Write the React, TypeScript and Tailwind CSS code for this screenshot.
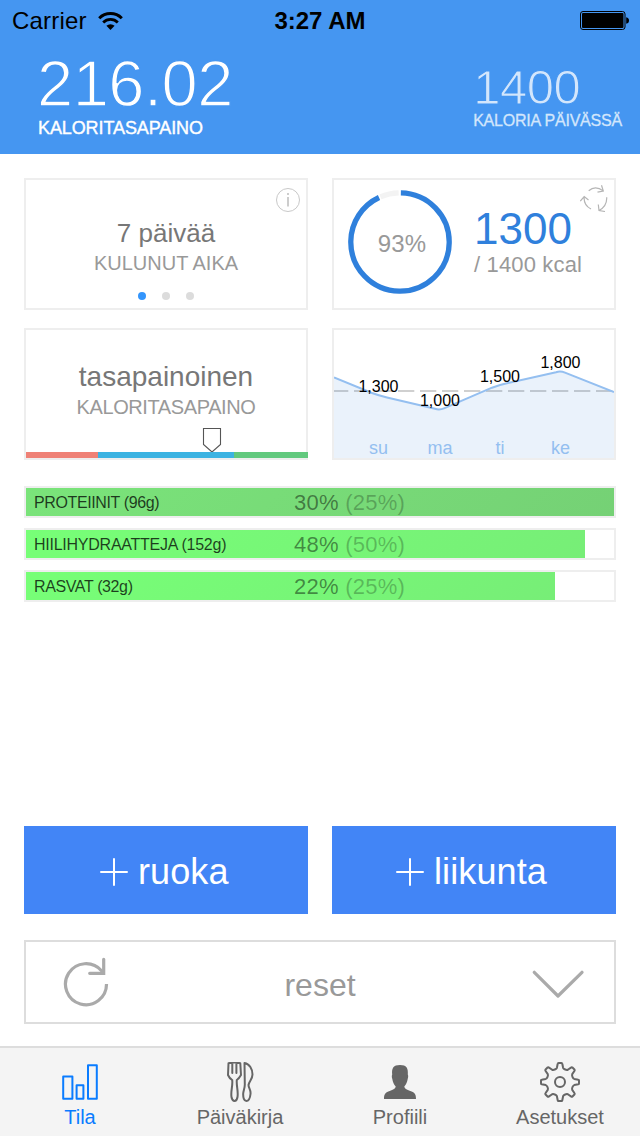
import type { ReactNode } from "react";

const card = "h-[132px] border-2 border-[#eeeeee] bg-white";

function WifiIcon() {
  return (
    <svg className="ml-[11px] h-[18px] w-[25px]" viewBox="0 0 25 18" fill="none" stroke="#000">
      <path d="M1.2 6.2a16 16 0 0 1 22.6 0" strokeWidth="3" />
      <path d="M5.2 10.4a10.4 10.4 0 0 1 14.6 0" strokeWidth="2.8" />
      <path d="M12.5 18 8.4 13.8a5.9 5.9 0 0 1 8.2 0Z" fill="#000" stroke="none" />
    </svg>
  );
}

function BatteryIcon() {
  return (
    <svg className="h-[19px] w-[50px]" viewBox="0 0 50 19">
      <rect x="0.5" y="0.5" width="44.5" height="18" rx="2.5" fill="none" stroke="#000" />
      <rect x="2" y="2" width="41.5" height="15" rx="1" />
      <path d="M46.2 6.2c2 .4 2.8 1.6 2.8 3.3s-.8 2.9-2.8 3.3Z" />
    </svg>
  );
}

function CycleIcon() {
  return (
    <svg className="h-7 w-7" viewBox="0 0 28 28" fill="none" stroke="#b5b5b5" strokeWidth="1.2">
      <path d="M8.7 6.7C13 3 18.5 3.3 23.3 7M21.5 1.3L23.3 7L17.5 8.2" />
      <path d="M26.700 13.200C27 18.500 24.500 23.500 19 26.500M18.300 20.500L19 26.500L25 27.500" />
      <path d="M11 25C5.800 22.300 3.700 17.500 4.200 12.500M0.300 17.200L4.200 12.500L8.500 16" />
    </svg>
  );
}

function RingGauge() {
  return (
    <svg className="h-[104px] w-[104px]" viewBox="0 0 104 104" fill="none" strokeWidth="5.3">
      <circle
        cx="52" cy="52" r="49.2" stroke="#2f80dc" pathLength="100"
        strokeDasharray="92.7 7.3" transform="rotate(-89 52 52)"
      />
      <circle
        cx="52" cy="52" r="49.2" stroke="#f3f3f3" pathLength="100"
        strokeDasharray="6.1 93.9" transform="rotate(-113.5 52 52)"
      />
    </svg>
  );
}

const points = [
  { label: "1,300", day: "su", x: 44.5, y: 62 },
  { label: "1,000", day: "ma", x: 106, y: 76 },
  { label: "1,500", day: "ti", x: 166, y: 52 },
  { label: "1,800", day: "ke", x: 226.5, y: 38 },
];

const chartLine =
  "M0 47.5 38 63Q45 65.6 53 67.5L101 78.8Q105.5 80.3 110 78.4L158 57.7Q166 54.7 174 53L222 42.2Q226.5 40.8 231 42.6L280 62";

function WeekChart() {
  return (
    <svg className="block h-32 w-[280px]" viewBox="0 0 280 128" fontFamily="Liberation Sans, sans-serif" textAnchor="middle">
      <path d="M-2 61H282" stroke="#d0d0d0" strokeWidth="2" strokeDasharray="16.3 5.7" />
      <path d={chartLine + "V128H0Z"} fill="#2f80dc" fillOpacity="0.1" />
      <path d={chartLine} fill="none" stroke="#94bff0" strokeWidth="2" />
      {points.map((p) => (
        <g key={p.day}>
          <text x={p.x} y={p.y} fontSize="16" fill="#000">{p.label}</text>
          <text x={p.x} y="124" fontSize="18" fill="#94bff0">{p.day}</text>
        </g>
      ))}
    </svg>
  );
}

function Nutrient(props: { name: string; share: string; target: string; fill: string; tracking: string }) {
  return (
    <div className="grid h-8 grid-rows-[28px] border-2 border-[#eeeeee]">
      <div className={"col-start-1 row-start-1 " + props.fill} />
      <div className="col-start-1 row-start-1 flex items-center pl-2 pt-0.5 leading-7">
        <span className={"w-[260px] text-[16px] text-black/75 " + props.tracking}>{props.name}</span>
        <span className="text-[22px] tracking-[0.25px] text-black/45">
          {props.share} <span className="text-black/25">{props.target}</span>
        </span>
      </div>
    </div>
  );
}

function AddButton(props: { label: string; pad: string }) {
  return (
    <button className={"flex h-[88px] items-center gap-2.5 bg-[#4285f6] text-white " + props.pad}>
      <svg className="mt-1 h-7 w-7" viewBox="0 0 28 28" stroke="#fff" strokeWidth="2" strokeLinecap="round">
        <path d="M14 1V27M1 14H27" />
      </svg>
      <span className="pt-[3px] text-[36px] leading-10 tracking-[0.1px]">{props.label}</span>
    </button>
  );
}

function gearPath() {
  const at = (deg: number, x: number, y: number) => {
    const a = (deg * Math.PI) / 180;
    return (20 + x * Math.cos(a) - y * Math.sin(a)).toFixed(2) + " " + (20 + x * Math.sin(a) + y * Math.cos(a)).toFixed(2);
  };
  let d = "";
  for (let k = 0; k < 8; k++) {
    const t = k * 45;
    d += (k ? "L" : "M") + at(t, -3.1, -14.2) + "L" + at(t, -2.3, -18.3);
    d += "Q" + at(t, -2.2, -19) + " " + at(t, -1.4, -19) + "L" + at(t, 1.4, -19);
    d += "Q" + at(t, 2.2, -19) + " " + at(t, 2.3, -18.3) + "L" + at(t, 3.1, -14.2);
    d += "C" + at(t, 3.6, -12.8) + " " + at(t + 45, -3.6, -12.8) + " " + at(t + 45, -3.1, -14.2);
  }
  return d + "Z";
}

function Tab(props: { label: string; color: string; children: ReactNode }) {
  return (
    <div className={"flex flex-col items-center pt-[14px] " + props.color}>
      <svg className="h-10 w-10" viewBox="0 0 40 40" fill="none" stroke="currentColor" strokeWidth="2" strokeLinejoin="round" strokeLinecap="round">
        {props.children}
      </svg>
      <span className="mt-[3px] text-[20px] leading-6">{props.label}</span>
    </div>
  );
}

export default function App() {
  return (
    <div className="flex h-[1136px] w-[640px] flex-col bg-white font-['Liberation_Sans',sans-serif]">
      <header className="h-[154px] bg-[#4596f1]">
        <div className="grid h-[41px] grid-cols-3 items-center pl-3 pr-[10px] text-[24px] leading-6 text-black">
          <div className="flex items-center tracking-[0.2px]">Carrier<WifiIcon /></div>
          <div className="pr-0.5 text-center font-bold">3:27 AM</div>
          <div className="flex justify-end"><BatteryIcon /></div>
        </div>
        <div className="flex justify-between pl-[37px] pr-[18px] text-white">
          <div className="pt-[10px]">
            <div className="text-[65px] leading-[66px] tracking-[-0.5px] [-webkit-text-stroke:1.4px_#4596f1]">216.02</div>
            <div className="pl-px pt-px text-[18px] leading-5 tracking-[-0.1px] [-webkit-text-stroke:0.4px_white]">KALORITASAPAINO</div>
          </div>
          <div className="pt-[22px] text-[#d3e6fc]">
            <div className="text-[49px] leading-[48px] tracking-[-0.5px] [-webkit-text-stroke:1.1px_#4596f1]">1400</div>
            <div className="text-[16px] leading-5 tracking-[-0.2px] [-webkit-text-stroke:0.3px]">KALORIA PÄIVÄSSÄ</div>
          </div>
        </div>
      </header>

      <main className="flex grow flex-col px-6 pt-6">
        <div className="grid grid-cols-2 gap-x-6 gap-y-[18px]">
          <section className={card + " relative flex flex-col items-center pt-[38px]"}>
            <div className="text-[26px] leading-[30px] text-[#777]">7 päivää</div>
            <div className="mt-[3px] text-[20px] leading-6 text-[#999]">KULUNUT AIKA</div>
            <div className="mt-[17px] flex gap-4">
              <i className="h-2 w-2 rounded-full bg-[#3395fc]" />
              <i className="h-2 w-2 rounded-full bg-[#dcdcdc]" />
              <i className="h-2 w-2 rounded-full bg-[#dcdcdc]" />
            </div>
            <svg className="absolute right-1.5 top-2 h-6 w-6" viewBox="0 0 24 24" fill="none" stroke="#c8c8c8">
              <circle cx="12" cy="12" r="11.5" />
              <path d="M12 9v9.5M12 5v2" strokeWidth="1.8" />
            </svg>
          </section>

          <section className={card + " relative flex pl-[14px] pt-[10px]"}>
            <div className="grid h-[104px] w-[104px] place-items-center">
              <div className="col-start-1 row-start-1"><RingGauge /></div>
              <span className="col-start-1 row-start-1 pl-1 pt-[3px] text-[24px] leading-6 tracking-[0.2px] text-[#999]">93%</span>
            </div>
            <div className="ml-[22px] pt-[15px]">
              <div className="text-[44px] leading-[48px] text-[#2f80dc]">1300</div>
              <div className="text-[22px] leading-6 tracking-[0.15px] text-[#999]">/ 1400 kcal</div>
            </div>
            <div className="absolute right-[6px] top-1"><CycleIcon /></div>
          </section>

          <section className={card + " relative flex flex-col items-center pt-[31px]"}>
            <div className="text-[28px] leading-8 text-[#777]">tasapainoinen</div>
            <div className="mt-0.5 text-[20px] leading-6 tracking-[-0.4px] text-[#999]">KALORITASAPAINO</div>
            <svg className="absolute left-[176px] top-[97px] h-[26px] w-5" viewBox="0 0 20 26" fill="#fff" stroke="#555" strokeWidth="1.1">
              <path d="M1.5 1.5H18.5V17.5L10 25 1.5 17.5Z" />
            </svg>
            <div className="absolute -right-0.5 bottom-0 left-0 flex h-1.5">
              <div className="w-[72px] bg-[#ef8176]" />
              <div className="w-[136px] bg-[#3cb3e2]" />
              <div className="grow bg-[#62c97e]" />
            </div>
          </section>

          <section className={card}><WeekChart /></section>
        </div>

        <div className="mt-[26px] flex flex-col gap-2.5">
          <Nutrient name="PROTEIINIT (96g)" share="30%" target="(25%)" tracking="tracking-[-0.38px]" fill="w-full bg-linear-135 from-[#7ae47a] to-[#75d175]" />
          <Nutrient name="HIILIHYDRAATTEJA (152g)" share="48%" target="(50%)" tracking="tracking-[-0.25px]" fill="w-[559px] bg-linear-135 from-[#77ff77] to-[#77ee77]" />
          <Nutrient name="RASVAT (32g)" share="22%" target="(25%)" tracking="tracking-[-0.38px]" fill="w-[529px] bg-linear-135 from-[#77ff77] to-[#77ee77]" />
        </div>

        <div className="mt-auto grid grid-cols-2 gap-6">
          <AddButton label="ruoka" pad="pl-[76px]" />
          <AddButton label="liikunta" pad="pl-16" />
        </div>

        <button className="mb-[22px] mt-[26px] flex h-[84px] items-center justify-between border-2 border-[#dddddd] pl-[36px] pr-[28px] text-[#999]">
          <svg className="h-[52px] w-12" viewBox="0 0 48 52" fill="none" stroke="#aaa" strokeWidth="3.2">
            <path d="M44.5 28A20.5 20.5 0 1 1 39.5 14.8L42 17.5" />
            <path d="M41.7 3.3V17.3H27.7" strokeLinecap="round" />
          </svg>
          <span className="pt-[5px] text-[32px] leading-9">reset</span>
          <svg className="h-8 w-14" viewBox="0 0 56 32" fill="none" stroke="#aaa" strokeWidth="3.2" strokeLinecap="round" strokeLinejoin="round">
            <path d="M4.3 6.3 28 30 52 6.3" />
          </svg>
        </button>
      </main>

      <nav className="grid h-[90px] grid-cols-4 border-t-2 border-[#dddddd] bg-[#f4f4f4]">
        <Tab label="Tila" color="text-[#0a7cff]">
          <path d="M3.2 14.6H12.4V36.8H3.2ZM16.6 23.2H23.4V36.8H16.6ZM28 3.2H36.8V36.8H28Z" />
        </Tab>
        <Tab label="Päiväkirja" color="text-[#666]">
          <path d="M8.5 1.2Q14.5 0 20.3 1.2L21 13Q19 16.5 16.8 18C16.2 24 18.5 29 17.5 35Q16.8 39 14.5 39T11.5 35C10.5 29 13 24 12.2 18Q9.5 16.5 8 13ZM12.3 2v9M16.4 2v9" />
          <path d="M24.5 1C29.5 1.8 32.5 7 32.5 12.5 32.5 17 29 19.5 28.5 23 28.5 26 31 27.5 30.5 32 30 37 28.5 39 26.3 39S23 36 23.2 31.5C23.5 28 25 25.5 24.8 22Z" />
        </Tab>
        <Tab label="Profiili" color="text-[#666]">
          <path d="M4 37C4 32 5.5 30.7 9 29.3 12.5 28 15.5 27 15.7 24.5 14 22.7 12.8 20 12.3 17 11.6 15 11.8 13.5 12.2 12.5 11.5 6 13.5 3 20 3S28.3 6 27.8 12.5C28.3 13.5 28.4 15 27.7 17 27.2 20 26 22.7 24.3 24.5 24.5 27 27.5 28 31 29.3 34.5 30.7 36 32 36 37Z" fill="currentColor" stroke="none" />
        </Tab>
        <Tab label="Asetukset" color="text-[#666]">
          <path d={gearPath()} />
          <circle cx="20" cy="20" r="5" />
        </Tab>
      </nav>
    </div>
  );
}
